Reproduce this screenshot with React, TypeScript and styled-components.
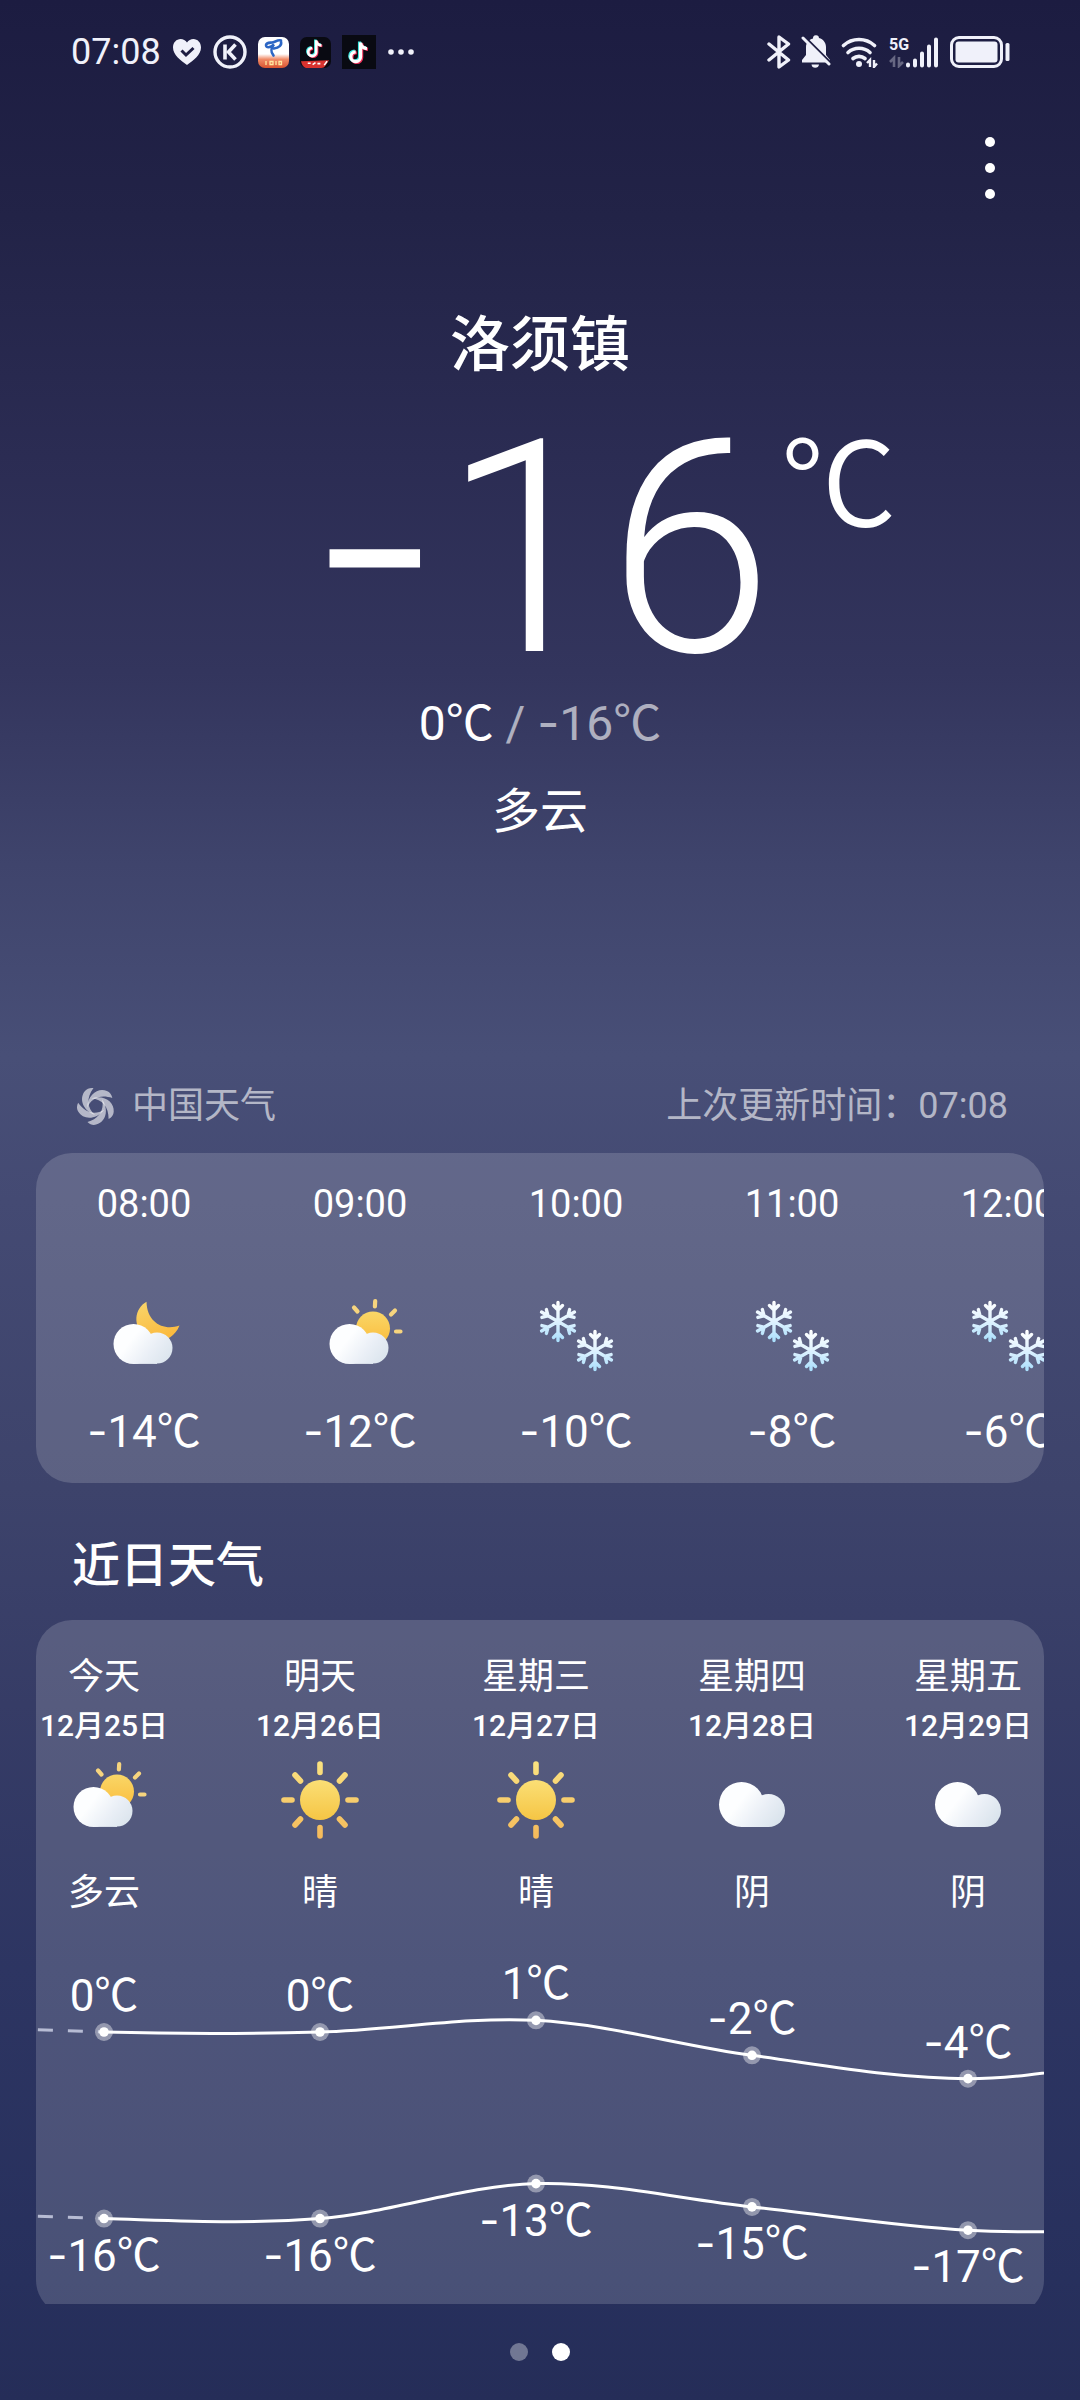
import React from "react";
import styled, { createGlobalStyle, css } from "styled-components";

/* ---------- data ---------- */

type Sky = "moonCloud" | "sunCloud" | "snow" | "sun" | "cloud";

const hours: { time: string; sky: Sky; temp: number }[] = [
  { time: "08:00", sky: "moonCloud", temp: -14 },
  { time: "09:00", sky: "sunCloud", temp: -12 },
  { time: "10:00", sky: "snow", temp: -10 },
  { time: "11:00", sky: "snow", temp: -8 },
  { time: "12:00", sky: "snow", temp: -6 },
];

const days: { name: string; date: string; sky: Sky; text: string }[] = [
  { name: "今天", date: "12月25日", sky: "sunCloud", text: "多云" },
  { name: "明天", date: "12月26日", sky: "sun", text: "晴" },
  { name: "星期三", date: "12月27日", sky: "sun", text: "晴" },
  { name: "星期四", date: "12月28日", sky: "cloud", text: "阴" },
  { name: "星期五", date: "12月29日", sky: "cloud", text: "阴" },
];

/* The first and last values belong to yesterday and to the day after the last column. */
const highs = [1, 0, 0, 1, -2, -4, -2];
const lows = [-15, -16, -16, -13, -15, -17, -17];

/* ---------- styles ---------- */

const COLUMN = 216;
const CHART_HEIGHT = 399;

const GlobalStyle = createGlobalStyle`
  *, *::before, *::after { box-sizing: border-box; }
  body {
    margin: 0;
    background: #252d59;
    color: #fff;
    font-family: Roboto, "Noto Sans CJK SC", sans-serif;
  }
  h1, h2, p, ol { margin: 0; padding: 0; font-weight: 400; }
  ol { list-style: none; }
`;

const Screen = styled.div`
  display: flex;
  flex-direction: column;
  height: 100vh;
  background: linear-gradient(
    180deg,
    #1c1c41 0%,
    #222347 9%,
    #2b2c53 19%,
    #33355d 28%,
    #3f446c 36%,
    #484f77 44%,
    #444a73 50%,
    #3d436b 62%,
    #363c66 71%,
    #2d3562 82%,
    #27305d 95%,
    #252d58 100%
  );
`;

const StatusBar = styled.div`
  display: flex;
  flex: none;
  justify-content: space-between;
  align-items: center;
  height: 104px;
  padding: 0 69px 0 71px;
  color: #f0f1fa;
`;

const StatusGroup = styled.div<{ $gap: number }>`
  display: flex;
  align-items: center;
  gap: ${(p) => p.$gap}px;
`;

const Clock = styled.span`
  font-size: 36px;
  line-height: 48px;
`;

const Toolbar = styled.header`
  display: flex;
  flex: none;
  justify-content: flex-end;
  align-items: center;
  height: 128px;
  padding: 0 54px;
`;

const MenuButton = styled.button`
  display: flex;
  flex-direction: column;
  align-items: center;
  justify-content: center;
  gap: 16px;
  width: 72px;
  height: 72px;
  padding: 0;
  border: 0;
  background: none;
`;

const MenuDot = styled.span`
  width: 10px;
  height: 10px;
  border-radius: 50%;
  background: #fff;
`;

const Content = styled.main`
  flex: 1;
  min-height: 0;
  overflow: hidden;
`;

const Current = styled.section`
  display: flex;
  flex-direction: column;
  align-items: stretch;
  padding: 72px 0 238px;
  text-align: center;
`;

const City = styled.h1`
  margin-bottom: 42px;
  font-size: 60px;
  font-weight: 500;
  line-height: 84px;
`;

const NowRow = styled.div`
  display: grid;
  grid-template-columns: 1fr auto 1fr;
  align-items: start;
  margin-bottom: 22px;
`;

const NowValue = styled.span`
  grid-column: 2;
  font-size: 298px;
  font-weight: 300;
  line-height: 240px;
`;

const NowUnit = styled.span`
  justify-self: start;
  margin-left: 8px;
  font-size: 116px;
  font-weight: 350;
  line-height: 112px;
`;

const Minus = styled.span`
  font-family: Inter, sans-serif;
  line-height: 0;
`;

const Range = styled.p`
  margin-bottom: 24px;
  font-size: 48px;
  line-height: 64px;
`;

const Faded = styled.span`
  opacity: 0.6;
`;

const Condition = styled.p`
  font-size: 48px;
  line-height: 64px;
`;

const SourceRow = styled.div`
  display: flex;
  justify-content: space-between;
  align-items: center;
  padding: 0 72px 0 77px;
  margin-bottom: 23px;
  color: rgba(255, 255, 255, 0.6);
  font-size: 36px;
  line-height: 48px;
`;

const Source = styled.div`
  display: flex;
  align-items: center;
  gap: 17px;
`;

const Card = styled.section`
  margin: 0 36px;
  overflow: hidden;
  border-radius: 36px;
  background: rgba(255, 255, 255, 0.16);
`;

const Heading = styled.h2`
  padding: 51px 72px 22px;
  font-size: 48px;
  font-weight: 500;
  line-height: 64px;
`;

const Track = styled.ol<{ $scrolled?: boolean }>`
  display: flex;
  ${(p) =>
    p.$scrolled &&
    css`
      margin-left: -40px;
    `}
`;

const Column = styled.li`
  display: flex;
  flex: none;
  flex-direction: column;
  align-items: center;
  width: ${COLUMN}px;
`;

const HourColumn = styled(Column)`
  padding: 27px 0 23px;
`;

const DayColumn = styled(Column)`
  padding-top: 33px;
`;

const HourTime = styled.span`
  margin-bottom: 61px;
  font-size: 38px;
  line-height: 48px;
`;

const HourTemp = styled.span`
  margin-top: 19px;
  font-size: 44px;
  line-height: 56px;
`;

const DayLabel = styled.span`
  font-size: 36px;
  line-height: 48px;
`;

const DayDate = styled.span`
  margin: 5px 0 6px;
  font-size: 30px;
  font-weight: 500;
  line-height: 40px;
`;

const DayCondition = styled(DayLabel)`
  margin-top: 21px;
`;

const Chart = styled.svg`
  display: block;
  margin-left: -40px;
`;

const ChartText = styled.text`
  fill: #fff;
  font-size: 44px;
  text-anchor: middle;
`;

const ChartMinus = styled.tspan`
  font-family: Inter, sans-serif;
`;

const Pager = styled.nav`
  display: flex;
  flex: none;
  justify-content: center;
  align-items: center;
  gap: 24px;
  height: 96px;
`;

const PageDot = styled.button<{ $active?: boolean }>`
  width: 18px;
  height: 18px;
  padding: 0;
  border: 0;
  border-radius: 50%;
  background: ${(p) => (p.$active ? "#fff" : "rgba(255, 255, 255, 0.35)")};
`;

/* ---------- small pieces ---------- */

const Temp = ({ value, unit = true }: { value: number; unit?: boolean }) => (
  <>
    {value < 0 && <Minus>-</Minus>}
    {Math.abs(value)}
    {unit && "℃"}
  </>
);

/* ---------- status icons ---------- */

const HeartIcon = () => (
  <svg width="30" height="28" viewBox="0 0 30 28">
    <path
      fill="currentColor"
      d="M15 27C9 22.500 1 17 1 9.500 1 4.500 4.500 1 8.600 1c2.600 0 4.900 1.300 6.400 3.400C16.500 2.300 18.800 1 21.400 1 25.500 1 29 4.500 29 9.500 29 17 21 22.500 15 27z"
    />
    <path d="M9.500 12.500l4.500 4.500 7.500-7" fill="none" stroke="#1e1e43" strokeWidth="3" />
  </svg>
);

const KIcon = () => (
  <svg width="34" height="34" viewBox="0 0 34 34" fill="none" stroke="currentColor">
    <circle cx="17" cy="17" r="15" strokeWidth="3.400" />
    <path d="M12 9.500v15" strokeWidth="3.600" />
    <path d="M22.500 9.500l-7 7.500 7 7.500" strokeWidth="3.600" />
  </svg>
);

const TelecomIcon = () => (
  <svg width="31" height="31" viewBox="0 0 31 31">
    <defs>
      <linearGradient id="telecom" x1="0" y1="0" x2="0" y2="1">
        <stop offset="0.550" stopColor="#fff" />
        <stop offset="0.720" stopColor="#f08a66" />
        <stop offset="1" stopColor="#d8532f" />
      </linearGradient>
    </defs>
    <rect width="31" height="31" rx="7" fill="url(#telecom)" />
    <path
      d="M23 3.500c-3-1-6 1.500-9 2-3 .3-5.500 0-6 2.500 0 3 4 3 8-.5-3 3.500-3.500 8-.5 11M23 4.500c1 3.500-2 6.500-7 7"
      fill="none"
      stroke="#2c66c4"
      strokeWidth="2.600"
      strokeLinecap="round"
    />
    <path d="M8 24v4M12 24.500v3h3v-3zM18 24v4M21 24.500h2.500v3H21z" fill="none" stroke="#ffe9a0" strokeWidth="1.300" />
  </svg>
);

const notePath = "M17.500 6v13.500a4.600 4.600 0 1 1-4.600-4.600M17.500 6.500c.5 3.500 2.500 5 6 5.300";

const TikTokIcon = ({ size, badge }: { size: number; badge?: boolean }) => (
  <svg width={size} height={size} viewBox="0 0 32 32">
    <rect width="32" height="32" rx={badge ? 7 : 0} fill="#090a12" />
    <g
      fill="none"
      strokeWidth="3"
      transform={badge ? "translate(1 -2) scale(.9)" : "translate(0 1)"}
    >
      <path d={notePath} stroke="#3fe6e0" transform="translate(-1 -.8)" />
      <path d={notePath} stroke="#f2315a" transform="translate(1 .8)" />
      <path d={notePath} stroke="#fff" />
    </g>
    {badge && (
      <>
        <path d="M1 25l29-1-4 6q-1 2-4 2H8q-4 0-6-4z" fill="#d8322f" />
        <path d="M8 27h3M13 28.500l3-2M18 27.500h3M25 29l3-4" stroke="#fff" strokeWidth="1.600" />
      </>
    )}
  </svg>
);

const EllipsisIcon = () => (
  <svg width="28" height="8" viewBox="0 0 28 8" fill="currentColor">
    <circle cx="4" cy="4" r="2.800" />
    <circle cx="14" cy="4" r="2.800" />
    <circle cx="24" cy="4" r="2.800" />
  </svg>
);

const BluetoothIcon = () => (
  <svg width="24" height="34" viewBox="0 0 24 34" fill="none" stroke="currentColor">
    <path
      d="M2 9l19.500 16L12 32V2l9.500 7L2 25"
      strokeWidth="3.400"
      strokeLinejoin="round"
      strokeLinecap="round"
    />
  </svg>
);

const BellOffIcon = () => (
  <svg width="30" height="34" viewBox="0 0 30 34">
    <path
      fill="currentColor"
      d="M12 3.500a3 3 0 0 1 6-.5c4.500 1 7 5 7 9v8l4 5v2.500H1V25l4-5v-8c0-4 2.500-7.500 7-8.500zM10.500 29.500h7.500a3.800 3.800 0 0 1-7.500 0z"
    />
    <path d="M0 4l28 28" stroke="#1e1e43" strokeWidth="3.500" transform="translate(2.500 -2.500)" />
    <path d="M2 3l26 26" stroke="currentColor" strokeWidth="3" strokeLinecap="round" />
  </svg>
);

const WifiIcon = () => (
  <svg width="38" height="32" viewBox="0 0 38 32" fill="none" stroke="currentColor">
    <g strokeWidth="3.600" strokeLinecap="round">
      <path d="M2.500 9.500a23 23 0 0 1 31 0" />
      <path d="M7 16.500a16.500 16.500 0 0 1 22 0" />
      <path d="M12 22.500a9.500 9.500 0 0 1 12 0" />
    </g>
    <circle cx="18" cy="28" r="3" fill="currentColor" stroke="none" />
    <path d="M26 27l3-3v7M33 24v7l3-3.500" strokeWidth="2.400" />
  </svg>
);

const SignalIcon = () => (
  <svg width="51" height="32" viewBox="0 0 51 32">
    <text x="0" y="14" fill="currentColor" fontSize="16" fontWeight="700" fontFamily="Roboto, sans-serif">
      5G
    </text>
    <path
      d="M1 26l4-4v9M10 21v9l4-4"
      fill="none"
      stroke="currentColor"
      strokeWidth="2.600"
      opacity="0.350"
    />
    <g stroke="currentColor" strokeWidth="4" strokeLinecap="round">
      <path d="M19 28.500v1M26 24.500v5M33 17.500v12M40 10.500v19M47 3.500v26" />
    </g>
  </svg>
);

const BatteryIcon = () => (
  <svg width="61" height="32" viewBox="0 0 61 32">
    <rect x="1.500" y="1.500" width="50" height="29" rx="7.500" fill="none" stroke="currentColor" strokeWidth="3" />
    <rect x="5.500" y="5.500" width="42" height="21" rx="3" fill="currentColor" />
    <rect x="55.500" y="7" width="4" height="18" rx="1.500" fill="currentColor" />
  </svg>
);

/* ---------- weather drawings ---------- */

const SwirlLogo = () => (
  <svg width="38" height="38" viewBox="-19 -19 38 38" fill="currentColor">
    {[0, 72, 144, 216, 288].map((angle) => (
      <path
        key={angle}
        transform={`rotate(${angle})`}
        d="M-11-15C-17-8-14 4-1 9-9 2-10-8-2.500-18-6-18.500-9-17.500-11-15z"
      />
    ))}
  </svg>
);

const Gradients = () => (
  <svg width="0" height="0" display="block" aria-hidden="true">
    <defs>
      <linearGradient id="cloudFill" gradientUnits="userSpaceOnUse" x1="28" y1="42" x2="72" y2="76">
        <stop offset="0.200" stopColor="#fdfeff" />
        <stop offset="0.600" stopColor="#eaeff6" />
        <stop offset="1" stopColor="#d9e3ec" />
      </linearGradient>
      <linearGradient id="sunFill" gradientUnits="userSpaceOnUse" x1="48" y1="26" x2="48" y2="70">
        <stop offset="0" stopColor="#fbe078" />
        <stop offset="1" stopColor="#f5c442" />
      </linearGradient>
      <linearGradient id="rayFill" gradientUnits="userSpaceOnUse" x1="48" y1="8" x2="48" y2="88">
        <stop offset="0" stopColor="#fae381" />
        <stop offset="1" stopColor="#f5b95a" />
      </linearGradient>
      <linearGradient id="smallSunFill" gradientUnits="userSpaceOnUse" x1="61" y1="22" x2="61" y2="56">
        <stop offset="0" stopColor="#f9d768" />
        <stop offset="1" stopColor="#fbbc3c" />
      </linearGradient>
      <linearGradient id="moonFill" gradientUnits="userSpaceOnUse" x1="48" y1="12" x2="62" y2="52">
        <stop offset="0" stopColor="#f9d56a" />
        <stop offset="1" stopColor="#fbb93d" />
      </linearGradient>
      <linearGradient id="snowFill" gradientUnits="userSpaceOnUse" x1="0" y1="-20" x2="0" y2="20">
        <stop offset="0" stopColor="#fff" />
        <stop offset="0.500" stopColor="#dff2ff" />
        <stop offset="1" stopColor="#a9defc" />
      </linearGradient>
    </defs>
  </svg>
);

const SmallCloud = () => (
  <g fill="url(#cloudFill)">
    <circle cx="61" cy="59" r="15.500" />
    <circle cx="37.500" cy="55" r="20" />
    <rect x="37" y="60" width="24" height="14.900" />
  </g>
);

const flakePath = [0, 60, 120, 180, 240, 300]
  .map((degrees) => {
    const a = (degrees * Math.PI) / 180;
    const turn = (x: number, y: number) =>
      `${(x * Math.cos(a) - y * Math.sin(a)).toFixed(2)} ${(x * Math.sin(a) + y * Math.cos(a)).toFixed(2)}`;
    return `M0 0L${turn(0, -19)}M${turn(-4.5, -16)}L${turn(0, -11.5)}L${turn(4.5, -16)}`;
  })
  .join("");

const Flake = ({ x, y }: { x: number; y: number }) => (
  <path
    transform={`translate(${x} ${y})`}
    d={flakePath}
    fill="none"
    stroke="url(#snowFill)"
    strokeWidth="3.400"
    strokeLinecap="round"
  />
);

const drawings: Record<Sky, React.ReactNode> = {
  moonCloud: (
    <>
      <path
        fill="url(#moonFill)"
        d="M50.500 12.700C38 20 37 36 48 47c10 9 29 6 35.500-10.500C68 42 51 34 50.500 12.700z"
      />
      <SmallCloud />
    </>
  ),
  sunCloud: (
    <>
      <circle cx="61" cy="39.500" r="17" fill="url(#smallSunFill)" />
      <path
        d="M63.200 12l-.3 5.500M42 18.500l3.500 4M83 21.500l-4 4M84 42.500h4.500"
        stroke="#f6d47e"
        strokeWidth="4.200"
        strokeLinecap="round"
      />
      <SmallCloud />
    </>
  ),
  snow: (
    <>
      <Flake x={30} y={32.5} />
      <Flake x={67} y={61.5} />
    </>
  ),
  sun: (
    <>
      <circle cx="48" cy="48" r="20" fill="url(#sunFill)" />
      <path
        d="M47.990 12v8.500M48.010 75.500V84M12 48h8M76 48h8M23 23l5.500 6M73 23l-5.500 6M23 73l5.500-6M73 73l-5.500-6"
        stroke="url(#rayFill)"
        strokeWidth="5.600"
        strokeLinecap="round"
      />
    </>
  ),
  cloud: (
    <g fill="url(#cloudFill)">
      <circle cx="64.500" cy="58.500" r="16.500" />
      <circle cx="37.500" cy="52.500" r="22.500" />
      <rect x="37" y="58" width="28" height="17" />
    </g>
  ),
};

const SkyIcon = ({ sky }: { sky: Sky }) => (
  <svg width="96" height="96" viewBox="0 0 96 96" aria-hidden="true">
    {drawings[sky]}
  </svg>
);

/* ---------- temperature chart ---------- */

type Point = { x: number; y: number };

const toPoints = (values: number[]): Point[] =>
  values.map((t, i) => ({ x: (i - 0.5) * COLUMN, y: 115 - 11.66 * t }));

/* One smooth segment between two neighbouring days. */
const segment = (p: Point[], i: number) => {
  const before = p[i - 1] ?? p[i];
  const after = p[i + 2] ?? p[i + 1];
  const m0 = (p[i + 1].y - before.y) / 2;
  const m1 = (after.y - p[i].y) / 2;
  const step = COLUMN / 3;
  return `M${p[i].x} ${p[i].y}C${p[i].x + step} ${p[i].y + m0 / 3} ${p[i + 1].x - step} ${
    p[i + 1].y - m1 / 3
  } ${p[i + 1].x} ${p[i + 1].y}`;
};

const Series = ({ values, labelOffset }: { values: number[]; labelOffset: number }) => {
  const points = toPoints(values);
  const shown = points.slice(1, 6);
  /* Runs from today back to yesterday, so that the dashes start at today's dot. */
  const past = `M${points[1].x} ${points[1].y}Q${points[1].x - 60} ${points[1].y - 2} ${
    points[0].x + 108
  } ${points[1].y - 4}`;
  return (
    <g>
      <path
        d={past}
        fill="none"
        stroke="#b7bcd4"
        strokeWidth="3"
        strokeDasharray="15 15"
        strokeDashoffset="-21"
      />
      {[1, 2, 3, 4, 5].map((i) => (
        <path key={i} d={segment(points, i)} fill="none" stroke="#fff" strokeWidth="3" />
      ))}
      {shown.map((p, i) => {
        const value = values[i + 1];
        return (
          <g key={i}>
            <circle cx={p.x} cy={p.y} r="9" fill="#fff" fillOpacity="0.400" />
            <circle cx={p.x} cy={p.y} r="4.800" fill="#fff" />
            <ChartText x={p.x} y={p.y + labelOffset}>
              {value < 0 && <ChartMinus>-</ChartMinus>}
              {Math.abs(value)}℃
            </ChartText>
          </g>
        );
      })}
    </g>
  );
};

/* ---------- page ---------- */

export default function App() {
  return (
    <Screen>
      <GlobalStyle />
      <StatusBar>
        <StatusGroup $gap={11}>
          <Clock>07:08</Clock>
          <HeartIcon />
          <KIcon />
          <TelecomIcon />
          <TikTokIcon size={31} badge />
          <TikTokIcon size={34} />
          <EllipsisIcon />
        </StatusGroup>
        <StatusGroup $gap={10}>
          <BluetoothIcon />
          <BellOffIcon />
          <WifiIcon />
          <SignalIcon />
          <BatteryIcon />
        </StatusGroup>
      </StatusBar>

      <Toolbar>
        <MenuButton aria-label="更多">
          <MenuDot />
          <MenuDot />
          <MenuDot />
        </MenuButton>
      </Toolbar>

      <Content>
        <Gradients />
        <Current>
          <City>洛须镇</City>
          <NowRow>
            <NowValue>
              <Temp value={-16} unit={false} />
            </NowValue>
            <NowUnit>℃</NowUnit>
          </NowRow>
          <Range>
            <Temp value={0} />
            <Faded>
              {" / "}
              <Temp value={-16} />
            </Faded>
          </Range>
          <Condition>多云</Condition>
        </Current>

        <SourceRow>
          <Source>
            <SwirlLogo />
            中国天气
          </Source>
          <span>上次更新时间：07:08</span>
        </SourceRow>

        <Card>
          <Track>
            {hours.map((h) => (
              <HourColumn key={h.time}>
                <HourTime>{h.time}</HourTime>
                <SkyIcon sky={h.sky} />
                <HourTemp>
                  <Temp value={h.temp} />
                </HourTemp>
              </HourColumn>
            ))}
          </Track>
        </Card>

        <Heading>近日天气</Heading>

        <Card>
          <Track $scrolled>
            {days.map((d) => (
              <DayColumn key={d.date}>
                <DayLabel>{d.name}</DayLabel>
                <DayDate>{d.date}</DayDate>
                <SkyIcon sky={d.sky} />
                <DayCondition>{d.text}</DayCondition>
              </DayColumn>
            ))}
          </Track>
          <Chart
            width={COLUMN * 5}
            height={CHART_HEIGHT}
            viewBox={`0 0 ${COLUMN * 5} ${CHART_HEIGHT}`}
            role="img"
            aria-label="气温"
          >
            <Series values={highs} labelOffset={-21} />
            <Series values={lows} labelOffset={52} />
          </Chart>
        </Card>
      </Content>

      <Pager>
        <PageDot aria-label="1" />
        <PageDot aria-label="2" $active />
      </Pager>
    </Screen>
  );
}
